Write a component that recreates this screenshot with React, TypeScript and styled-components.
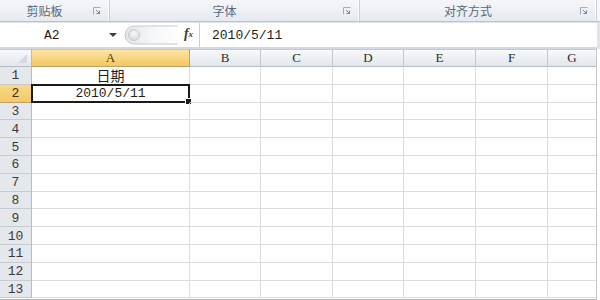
import React from 'react';
import styled, { createGlobalStyle } from 'styled-components';

const columns = [
  { name: 'A', width: 158 },
  { name: 'B', width: 71 },
  { name: 'C', width: 72 },
  { name: 'D', width: 71 },
  { name: 'E', width: 72 },
  { name: 'F', width: 72 },
  { name: 'G', width: 49 },
];

const rowCount = 13;

const cellData: Record<string, string> = {
  'A1': '日期',
  'A2': '2010/5/11',
};

const GlobalStyle = createGlobalStyle`
  html, body {
    margin: 0;
    padding: 0;
    background: #ffffff;
    overflow: hidden;
  }
`;

const Window = styled.div`
  width: 600px;
  height: 300px;
  display: flex;
  flex-direction: column;
  background: #dfe4ea;
  overflow: hidden;
  font-family: "Liberation Mono", "Noto Sans CJK SC", monospace;
`;

const Ribbon = styled.div`
  height: 22px;
  display: flex;
  background: linear-gradient(#f4f6f9, #e6eaf0);
  border-bottom: 1px solid #b9c3cf;
  box-sizing: border-box;
`;

const Group = styled.div<{ $width: number }>`
  width: ${(p) => p.$width}px;
  position: relative;
  display: flex;
  align-items: center;
  justify-content: center;
  padding-right: 20px;
  box-sizing: border-box;
  border-right: 1px solid #c6ced8;
  box-shadow: inset -1px 0 0 #fbfcfd;
  font-family: "Noto Sans CJK SC", sans-serif;
  font-size: 12px;
  color: #5a6878;
`;

const Launcher = styled.svg`
  position: absolute;
  right: 8px;
  top: 7px;
`;

const RibbonRest = styled.div`
  flex: 1;
  background: #f5f7fa;
`;

const FormulaBar = styled.div`
  height: 24px;
  margin-top: 1px;
  display: flex;
  align-items: stretch;
  background: #ffffff;
  width: 597px;
`;

const NameBox = styled.div`
  width: 122px;
  position: relative;
  display: flex;
  align-items: center;
  padding-left: 44px;
  box-sizing: border-box;
  font-size: 13px;
  color: #1e1e1e;
`;

const DropArrow = styled.div`
  position: absolute;
  right: 5px;
  top: 10px;
  width: 0;
  height: 0;
  border-left: 4px solid transparent;
  border-right: 4px solid transparent;
  border-top: 4px solid #3c3c3c;
`;

const Handle = styled.div`
  width: 56px;
  position: relative;
  display: flex;
  align-items: center;
`;

const Fx = styled.div`
  width: 22px;
  display: flex;
  align-items: center;
  justify-content: center;
  font-family: "Liberation Serif", serif;
  font-style: italic;
  font-weight: bold;
  font-size: 14px;
  color: #3a3a3a;
  border-right: 1px solid #c9ced6;
  padding-bottom: 2px;
  box-sizing: border-box;

  sub {
    font-size: 9px;
    vertical-align: -1px;
  }
`;

const FormulaInput = styled.div`
  flex: 1;
  display: flex;
  align-items: center;
  padding-left: 12px;
  font-size: 13px;
  color: #1e1e1e;
`;

const Gap = styled.div`
  height: 2px;
  width: 597px;
  background: #d1d8e1;
`;

const SheetArea = styled.div`
  flex: 1;
  display: flex;
  background: #ffffff;
`;

const Sheet = styled.div`
  display: grid;
  grid-template-columns: 32px ${columns.map((c) => `${c.width}px`).join(' ')};
  grid-template-rows: 18px repeat(${rowCount}, 17.8px);
  width: 597px;
  border-bottom: 1px solid #b5b5b5;
  align-content: start;
  overflow: hidden;
`;

const EdgeBar = styled.div`
  width: 3px;
  border-left: 1px solid #c3c7cc;
  background: #ffffff;
`;

const Corner = styled.div`
  background: linear-gradient(#f7f8fa, #e3e7ec);
  border-right: 1px solid #b4bcc6;
  border-bottom: 1px solid #b4bcc6;
  border-top: 1px solid #c2c9d2;
  box-sizing: border-box;
  position: relative;
`;

const CornerMark = styled.div`
  position: absolute;
  right: 4px;
  bottom: 3px;
  width: 0;
  height: 0;
  border-left: 9px solid transparent;
  border-bottom: 9px solid #d4d9df;
`;

const ColHeader = styled.div<{ $active?: boolean }>`
  display: flex;
  align-items: center;
  justify-content: center;
  box-sizing: border-box;
  border-top: 1px solid #c2c9d2;
  border-right: 1px solid ${(p) => (p.$active ? '#c2a25a' : '#c2c8d0')};
  border-bottom: 1px solid ${(p) => (p.$active ? '#c2a25a' : '#b4bcc6')};
  background: ${(p) =>
    p.$active
      ? 'linear-gradient(#fbe4a6, #f5c75f)'
      : 'linear-gradient(#f8f9fb, #e2e6eb)'};
  font-family: "Liberation Serif", serif;
  font-size: 13px;
  color: ${(p) => (p.$active ? '#4d3a10' : '#2c2c2c')};
`;

const RowHeader = styled.div<{ $active?: boolean }>`
  display: flex;
  align-items: center;
  justify-content: center;
  box-sizing: border-box;
  border-right: 1px solid ${(p) => (p.$active ? '#c2a25a' : '#b4bcc6')};
  border-bottom: 1px solid ${(p) => (p.$active ? '#c2a25a' : '#c5cbd3')};
  background: ${(p) => (p.$active ? 'linear-gradient(#f8d98a, #f3c865)' : '#e4e8ed')};
  font-size: 13px;
  color: ${(p) => (p.$active ? '#3d2f0c' : '#3a3a3a')};
  padding-top: 1px;
`;

const Cell = styled.div<{ $cjk?: boolean }>`
  display: flex;
  align-items: center;
  justify-content: center;
  box-sizing: border-box;
  border-right: 1px solid #dadcdd;
  border-bottom: 1px solid #dadcdd;
  font-family: ${(p) => (p.$cjk ? '"Noto Sans CJK SC", sans-serif' : '"Liberation Mono", monospace')};
  font-size: ${(p) => (p.$cjk ? '14px' : '13px')};
  color: #1e1e1e;
  white-space: nowrap;
  position: relative;
  line-height: 1;
`;

const Selection = styled.div`
  position: absolute;
  left: -1px;
  top: -1px;
  right: -1px;
  bottom: -1px;
  border: 2px solid #1a1a1a;
  pointer-events: none;
`;

const FillHandle = styled.div`
  position: absolute;
  right: -4px;
  bottom: -4px;
  width: 5px;
  height: 5px;
  background: #1a1a1a;
  border: 1px solid #ffffff;
`;

const LauncherIcon = () => (
  <Launcher width="8" height="8" viewBox="0 0 8 8">
    <path d="M0.5 7.5 V0.5 H7.5" stroke="#a3acb8" fill="none" />
    <path d="M3 3 L6.5 6.5 M6.5 3.5 V6.5 H3.5" stroke="#7d8896" fill="none" />
  </Launcher>
);

const HandleIcon = () => (
  <svg width="56" height="24" viewBox="0 0 56 24">
    <defs>
      <linearGradient id="pill" x1="0" x2="1" y1="0" y2="0">
        <stop offset="0" stopColor="#e3e6ea" />
        <stop offset="0.5" stopColor="#f6f7f8" />
        <stop offset="1" stopColor="#ffffff" />
      </linearGradient>
      <radialGradient id="knob" cx="0.5" cy="0.4" r="0.6">
        <stop offset="0" stopColor="#fafafa" />
        <stop offset="1" stopColor="#d2d6dc" />
      </radialGradient>
    </defs>
    <path d="M60 3 H12 A9 9 0 0 0 12 21 H60" fill="url(#pill)" stroke="#c4c9cf" />
    <circle cx="12" cy="12" r="5.5" fill="url(#knob)" stroke="#c9cdd3" />
  </svg>
);

const App: React.FC = () => {
  const activeCol = 'A';
  const activeRow = 2;

  return (
    <Window>
      <GlobalStyle />
      <Ribbon>
        <Group $width={110}>
          剪贴板
          <LauncherIcon />
        </Group>
        <Group $width={250}>
          字体
          <LauncherIcon />
        </Group>
        <Group $width={237}>
          对齐方式
          <LauncherIcon />
        </Group>
        <RibbonRest />
      </Ribbon>
      <FormulaBar>
        <NameBox>
          A2
          <DropArrow />
        </NameBox>
        <Handle>
          <HandleIcon />
        </Handle>
        <Fx>
          f<sub>x</sub>
        </Fx>
        <FormulaInput>2010/5/11</FormulaInput>
      </FormulaBar>
      <Gap />
      <SheetArea>
        <Sheet>
          <Corner>
            <CornerMark />
          </Corner>
          {columns.map((c) => (
            <ColHeader key={c.name} $active={c.name === activeCol}>
              {c.name}
            </ColHeader>
          ))}
          {Array.from({ length: rowCount }, (_, i) => i + 1).map((row) => (
            <React.Fragment key={row}>
              <RowHeader $active={row === activeRow}>{row}</RowHeader>
              {columns.map((c) => {
                const ref = `${c.name}${row}`;
                const value = cellData[ref];
                const selected = c.name === activeCol && row === activeRow;
                return (
                  <Cell key={ref} $cjk={ref === 'A1'}>
                    {value}
                    {selected && (
                      <Selection>
                        <FillHandle />
                      </Selection>
                    )}
                  </Cell>
                );
              })}
            </React.Fragment>
          ))}
        </Sheet>
        <EdgeBar />
      </SheetArea>
    </Window>
  );
};

export default App;
